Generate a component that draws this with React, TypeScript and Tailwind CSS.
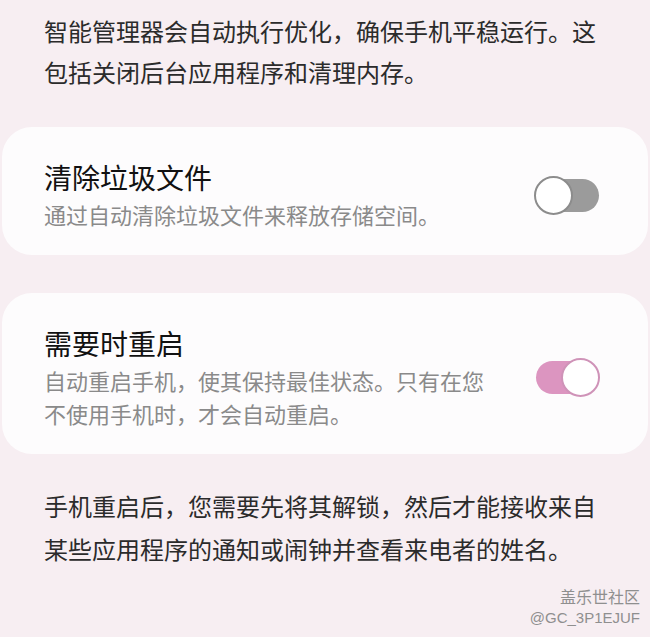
import React, { useState } from "react";

const font = { fontFamily: '"Noto Sans CJK SC", "Noto Sans", sans-serif' };

interface ToggleProps {
  checked: boolean;
  onChange: (a: boolean) => void;
}

const Toggle: React.FC<ToggleProps> = ({ checked, onChange }) => (
  <button
    type="button"
    role="switch"
    aria-checked={checked}
    onClick={() => onChange(!checked)}
    className="relative flex h-[40px] w-[66px] shrink-0 items-center"
  >
    <span
      className={[
        "absolute left-[2px] right-[1px] h-[33px] rounded-full",
        checked ? "bg-[#dc95c0]" : "bg-[#9b9b9b]",
      ].join(" ")}
    />
    <span
      className={[
        "absolute h-[39px] w-[39px] rounded-full border-2 bg-white",
        checked ? "right-0 border-[#cf93b8]" : "left-0 border-[#8c8c8c]",
      ].join(" ")}
    />
  </button>
);

interface SettingCardProps {
  title: string;
  desc: string;
  checked: boolean;
  onChange: (a: boolean) => void;
}

const SettingCard: React.FC<SettingCardProps> = ({
  title,
  desc,
  checked,
  onChange,
}) => (
  <div className="mx-[2px] flex items-center rounded-[30px] bg-[#fdfcfd] pl-[42px] pr-[48px] pt-[32px] pb-[24px]">
    <div className="flex-1">
      <div className="text-[28px] leading-[36px] text-[#111111]">{title}</div>
      <div className="mt-[3px] w-[452px] text-[22px] leading-[33px] text-[#8a8a8a]">
        {desc}
      </div>
    </div>
    <Toggle checked={checked} onChange={onChange} />
  </div>
);

export default function App() {
  const [junk, setJunk] = useState(false);
  const [restart, setRestart] = useState(true);

  return (
    <div
      className="relative h-[637px] w-[650px] overflow-hidden bg-[#f7eef2]"
      style={font}
    >
      <p className="px-[44px] pt-[10px] text-[24px] leading-[41px] text-[#2b2b2b]">
        智能管理器会自动执行优化，确保手机平稳运行。这包括关闭后台应用程序和清理内存。
      </p>
      <div className="mt-[35px]">
        <SettingCard
          title="清除垃圾文件"
          desc="通过自动清除垃圾文件来释放存储空间。"
          checked={junk}
          onChange={setJunk}
        />
      </div>
      <div className="mt-[38px]">
        <SettingCard
          title="需要时重启"
          desc="自动重启手机，使其保持最佳状态。只有在您不使用手机时，才会自动重启。"
          checked={restart}
          onChange={setRestart}
        />
      </div>
      <p className="mt-[30px] px-[44px] text-[24px] leading-[43px] text-[#2b2b2b]">
        手机重启后，您需要先将其解锁，然后才能接收来自某些应用程序的通知或闹钟并查看来电者的姓名。
      </p>
      <div className="absolute right-[10px] bottom-[8px] flex flex-col items-end text-[#8f8f8f]">
        <span className="text-[16px] leading-[22px]">盖乐世社区</span>
        <span
          className="text-[15px] leading-[22px]"
          style={{ fontFamily: '"Liberation Sans", sans-serif' }}
        >
          @GC_3P1EJUF
        </span>
      </div>
    </div>
  );
}
